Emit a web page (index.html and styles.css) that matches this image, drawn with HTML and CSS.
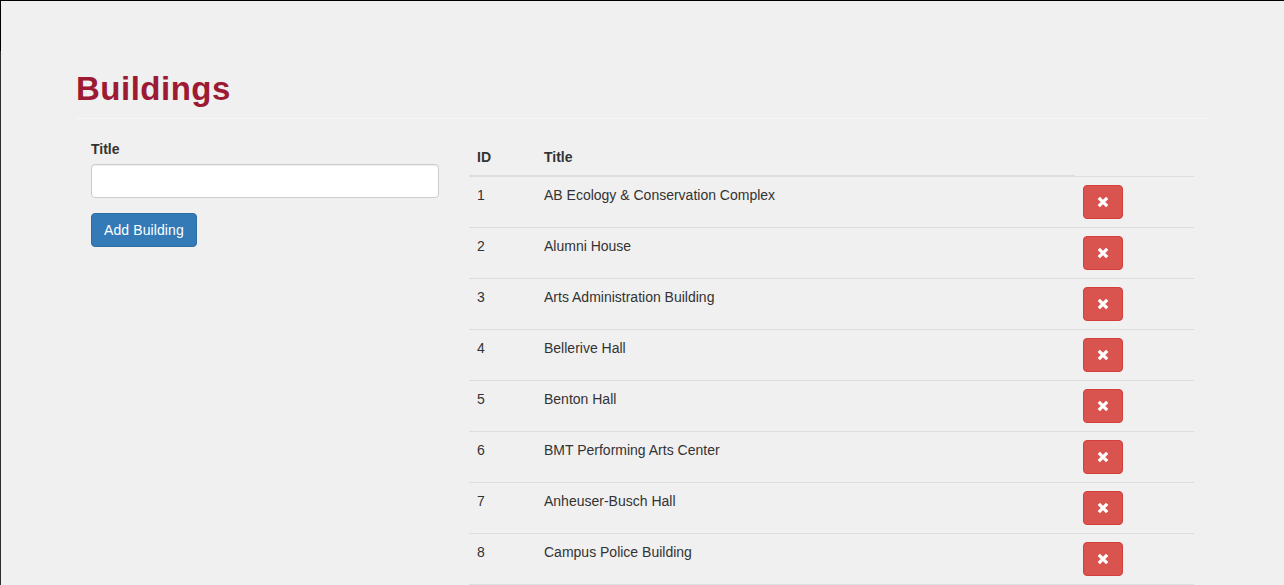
FILE: index.html
```html
<!DOCTYPE html>
<html lang="en">
<head>
<meta charset="utf-8">
<title>Buildings</title>
<link rel="stylesheet" href="styles.css">
</head>
<body>
<div class="page">
  <h1 class="page-title">Buildings</h1>
  <div class="row">
    <div class="col-form">
      <label class="field-label" for="title">Title</label>
      <input class="field-input" id="title" type="text">
      <button class="btn-primary" type="button">Add Building</button>
    </div>
    <div class="col-table">
      <table class="data-table">
        <thead>
          <tr><th class="c-id">ID</th><th class="c-title">Title</th><th class="c-action"></th></tr>
        </thead>
        <tbody>
          <tr><td>1</td><td>AB Ecology &amp; Conservation Complex</td><td><button class="btn-danger" type="button"><svg width="12" height="12" viewBox="0 0 12 12"><path d="M1.8 1.8 L10.2 10.2 M10.2 1.8 L1.8 10.2" stroke="#fff" stroke-width="3.2"/></svg></button></td></tr>
          <tr><td>2</td><td>Alumni House</td><td><button class="btn-danger" type="button"><svg width="12" height="12" viewBox="0 0 12 12"><path d="M1.8 1.8 L10.2 10.2 M10.2 1.8 L1.8 10.2" stroke="#fff" stroke-width="3.2"/></svg></button></td></tr>
          <tr><td>3</td><td>Arts Administration Building</td><td><button class="btn-danger" type="button"><svg width="12" height="12" viewBox="0 0 12 12"><path d="M1.8 1.8 L10.2 10.2 M10.2 1.8 L1.8 10.2" stroke="#fff" stroke-width="3.2"/></svg></button></td></tr>
          <tr><td>4</td><td>Bellerive Hall</td><td><button class="btn-danger" type="button"><svg width="12" height="12" viewBox="0 0 12 12"><path d="M1.8 1.8 L10.2 10.2 M10.2 1.8 L1.8 10.2" stroke="#fff" stroke-width="3.2"/></svg></button></td></tr>
          <tr><td>5</td><td>Benton Hall</td><td><button class="btn-danger" type="button"><svg width="12" height="12" viewBox="0 0 12 12"><path d="M1.8 1.8 L10.2 10.2 M10.2 1.8 L1.8 10.2" stroke="#fff" stroke-width="3.2"/></svg></button></td></tr>
          <tr><td>6</td><td>BMT Performing Arts Center</td><td><button class="btn-danger" type="button"><svg width="12" height="12" viewBox="0 0 12 12"><path d="M1.8 1.8 L10.2 10.2 M10.2 1.8 L1.8 10.2" stroke="#fff" stroke-width="3.2"/></svg></button></td></tr>
          <tr><td>7</td><td>Anheuser-Busch Hall</td><td><button class="btn-danger" type="button"><svg width="12" height="12" viewBox="0 0 12 12"><path d="M1.8 1.8 L10.2 10.2 M10.2 1.8 L1.8 10.2" stroke="#fff" stroke-width="3.2"/></svg></button></td></tr>
          <tr><td>8</td><td>Campus Police Building</td><td><button class="btn-danger" type="button"><svg width="12" height="12" viewBox="0 0 12 12"><path d="M1.8 1.8 L10.2 10.2 M10.2 1.8 L1.8 10.2" stroke="#fff" stroke-width="3.2"/></svg></button></td></tr>
        </tbody>
      </table>
    </div>
  </div>
</div>
</body>
</html>
```
FILE: styles.css
```css
html {
  background:
    linear-gradient(#000, #000) 0 0 / 1px 51px no-repeat,
    linear-gradient(#2e2e2e, #2e2e2e) 0 0 / 1px 100% no-repeat,
    #f0f0f0;
}
body {
  margin: 0;
  border-top: 1px solid #000;
  font-family: "Liberation Sans", Arial, sans-serif;
  font-size: 14px;
  line-height: 20px;
  color: #333;
}
.page {
  width: 1132px;
  margin-left: 76px;
  padding-top: 68px;
}
.page-title {
  margin: 0 0 9px 0;
  font-size: 33px;
  line-height: 40px;
  font-weight: 700;
  letter-spacing: 0.5px;
  color: #9c1a33;
}
.row {
  display: flex;
  border-top: 1px solid #f6f6f6;
}
.col-form {
  box-sizing: border-box;
  width: 378px;
  padding: 20px 15px 0 15px;
  display: flex;
  flex-direction: column;
  align-items: flex-start;
}
.col-table {
  box-sizing: border-box;
  width: 754px;
  padding: 20px 14px 0 15px;
}
.field-label {
  display: block;
  font-weight: 700;
  margin-bottom: 5px;
}
.field-input {
  box-sizing: border-box;
  width: 100%;
  height: 34px;
  margin: 0;
  border: 1px solid #ccc;
  border-radius: 4px;
  background: #fff;
  box-shadow: inset 0 1px 1px rgba(0,0,0,0.075);
}
.btn-primary {
  margin-top: 15px;
  height: 34px;
  padding: 6px 12px;
  font-family: inherit;
  font-size: 14px;
  line-height: 20px;
  color: #fff;
  background: #337ab7;
  border: 1px solid #2e6da4;
  border-radius: 4px;
  letter-spacing: 0.1px;
}
.data-table {
  width: 725px;
  border-collapse: collapse;
}
.data-table th,
.data-table td {
  padding: 8px;
  text-align: left;
  vertical-align: top;
  line-height: 20px;
}
.data-table th {
  font-weight: 700;
  vertical-align: bottom;
  border-bottom: 2px solid #ddd;
}
.data-table th.c-action {
  border-bottom: 0;
}
.data-table td {
  border-top: 1px solid #ddd;
}
.data-table tbody tr:last-child td {
  border-bottom: 1px solid #ddd;
}
.c-id { width: 51px; }
.c-title { width: 523px; }
.c-action { width: 103px; }
.btn-danger {
  display: flex;
  align-items: center;
  justify-content: center;
  box-sizing: border-box;
  width: 40px;
  height: 34px;
  padding: 0;
  margin: 0;
  background: #d9534f;
  border: 1px solid #d43f3a;
  border-radius: 4px;
}
```
